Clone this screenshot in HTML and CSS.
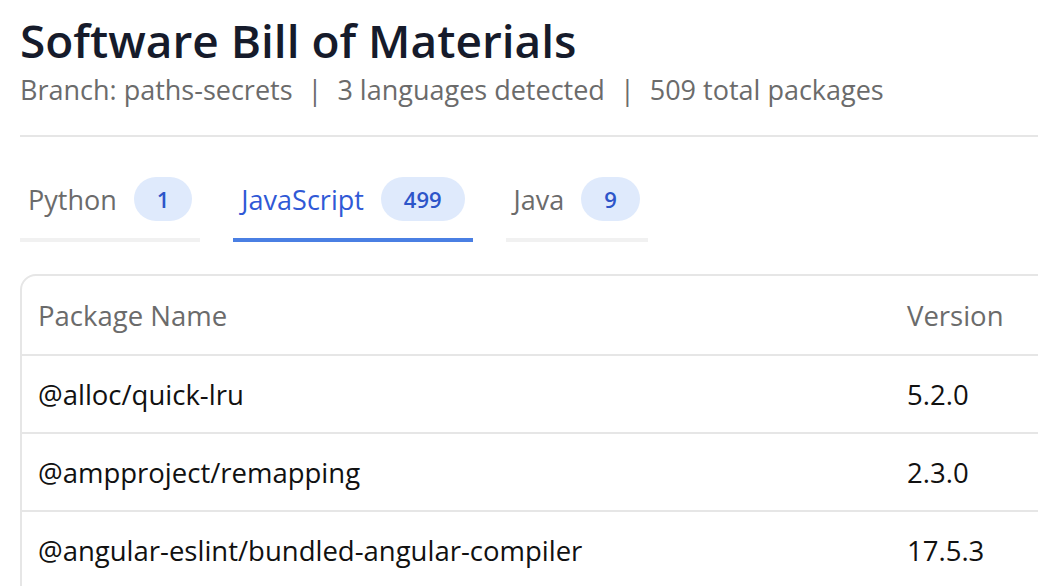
FILE: index.html
```html
<!DOCTYPE html>
<html lang="en">
<head>
    <meta charset="UTF-8">
    <meta name="viewport" content="width=device-width, initial-scale=1.0">
    <title>Software Bill of Materials</title>
    <link rel="stylesheet" href="styles.css">
</head>
<body>
    <div class="page">
        <header class="sbom-header">
            <h1>Software Bill of Materials</h1>
            <p class="meta">Branch: paths-secrets <span class="sep">|</span> 3 languages detected <span class="sep">|</span> 509 total packages</p>
        </header>

        <nav class="tabs">
            <button class="tab">Python <span class="count">1</span></button>
            <button class="tab active">JavaScript <span class="count">499</span></button>
            <button class="tab">Java <span class="count">9</span></button>
        </nav>

        <div class="table-card">
            <table class="packages">
                <thead>
                    <tr>
                        <th>Package Name</th>
                        <th class="col-version">Version</th>
                    </tr>
                </thead>
                <tbody>
                    <tr>
                        <td>@alloc/quick-lru</td>
                        <td class="col-version">5.2.0</td>
                    </tr>
                    <tr>
                        <td>@ampproject/remapping</td>
                        <td class="col-version">2.3.0</td>
                    </tr>
                    <tr>
                        <td>@angular-eslint/bundled-angular-compiler</td>
                        <td class="col-version">17.5.3</td>
                    </tr>
                </tbody>
            </table>
        </div>
    </div>
</body>
</html>
```

FILE: styles.css
```css
html, body {
    margin: 0;
    overflow: hidden;
}
body {
    font-family: "Open Sans", Lato, sans-serif;
    background-color: #fff;
    color: #111;
}
.page {
    width: 1120px;
    padding: 10px 20px 0;
}
.sbom-header {
    border-bottom: 2px solid #e6e6e6;
    padding-bottom: 25px;
}
.sbom-header h1 {
    margin: 0;
    font-size: 46px;
    font-weight: 600;
    color: #161b2b;
    line-height: 60px;
}
.sbom-header .meta {
    margin: 0;
    font-size: 27px;
    color: #6b6b6b;
    line-height: 40px;
}
.sbom-header .sep {
    margin: 0 8px;
}
.tabs {
    display: flex;
    gap: 33px;
    margin-top: 40px;
}
.tab {
    display: flex;
    align-items: center;
    gap: 17px;
    padding: 0 8px 17px;
    border: none;
    border-bottom: 4px solid #f1f1f1;
    background: none;
    font-family: inherit;
    font-size: 27px;
    color: #6b6b6b;
    cursor: pointer;
}
.tab.active {
    color: #3059d6;
    border-bottom-color: #4a7fe3;
}
.tab .count {
    display: inline-block;
    padding: 0 23px;
    height: 44px;
    line-height: 44px;
    border-radius: 22px;
    background-color: #dfeafc;
    color: #2d55c9;
    font-size: 22px;
    font-weight: 600;
    text-align: center;
}
.table-card {
    margin-top: 32px;
    padding-bottom: 14px;
    border: 2px solid #e6e6e6;
    border-radius: 16px;
    overflow: hidden;
}
.packages {
    width: 100%;
    border-collapse: collapse;
}
.packages th,
.packages td {
    text-align: left;
    padding: 0 16px;
    font-size: 27.5px;
    height: 76px;
}
.packages th {
    height: 78px;
    font-weight: 400;
    color: #6b6b6b;
}
.packages tbody td {
    border-top: 2px solid #e6e6e6;
    color: #111;
}
.packages .col-version {
    width: 215px;
}
```
